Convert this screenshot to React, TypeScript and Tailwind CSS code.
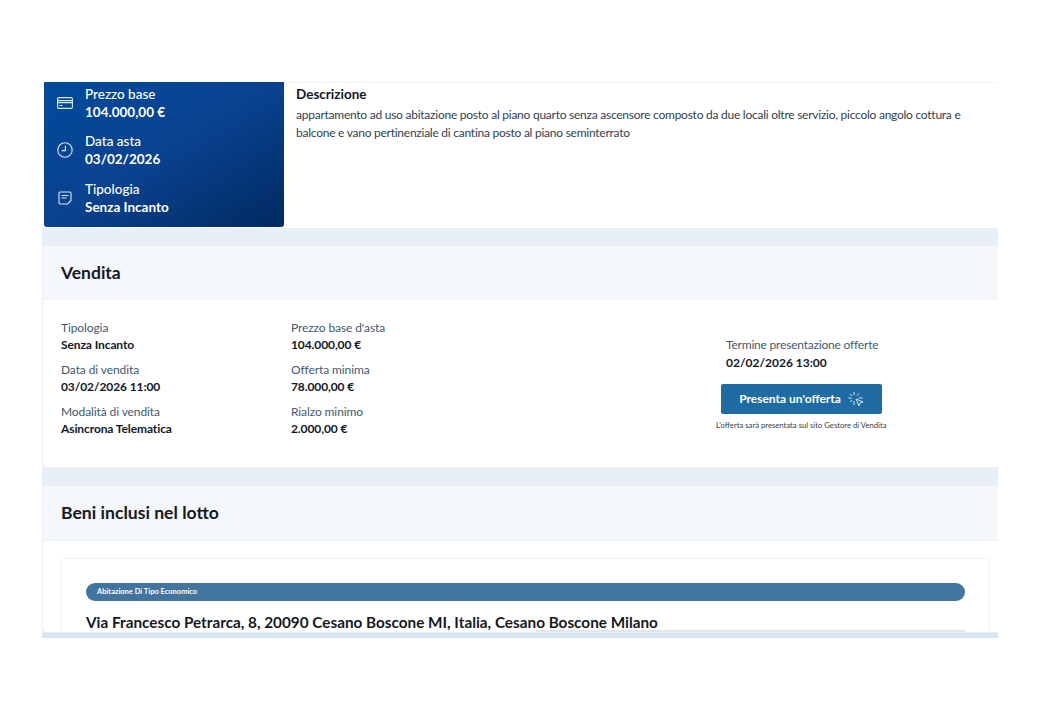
import React from "react";

const Pair = ({ label, value }: { label: string; value: string }) => (
  <div className="h-[42px]">
    <div className="text-[12px] leading-[20px] tracking-[-0.1px] text-[#435a70]">{label}</div>
    <div className="-mt-[1px] text-[12px] leading-[16px] tracking-[-0.1px] font-bold text-[#111827]">{value}</div>
  </div>
);

const Side = ({ icon, a, b }: { icon: React.ReactNode; a: string; b: string }) => (
  <div className="flex h-[47.5px] items-center">
    <div className="flex w-[41px] justify-center pl-[1px]">{icon}</div>
    <div className="text-[13.5px] leading-[18px] text-white">
      <div className="font-medium">{a}</div>
      <div className="font-bold">{b}</div>
    </div>
  </div>
);

export default function App() {
  return (
    <div className="min-h-[720px] bg-white pt-[82px] pl-[42px]" style={{ fontFamily: "Lato, 'Noto Sans', sans-serif" }}>
      <div className="w-[956px] h-[556px] overflow-hidden bg-[#e8eff6] border-b-[5px] border-[#d9e6f2]">
        <div className="flex h-[146px] bg-white">
          <div className="ml-[2px] mb-[1px] w-[240px] rounded-b-[3px] bg-gradient-to-br from-[#004a9c] via-[#0a428f] to-[#012a60]">
            <div className="-mt-[3px]">
              <Side
                a="Prezzo base"
                b="104.000,00 €"
                icon={
                  <svg width="16" height="12" viewBox="0 0 16 12" fill="none" stroke="#dbe7f5" strokeWidth="1.1">
                    <rect x="0.6" y="0.6" width="14.8" height="10.8" rx="1.2" />
                    <path d="M0.6 3.6h14.8M0.6 5.6h14.8M2.5 8.5h3" />
                  </svg>
                }
              />
              <Side
                a="Data asta"
                b="03/02/2026"
                icon={
                  <svg width="16" height="16" viewBox="0 0 16 16" fill="none" stroke="#dbe7f5" strokeWidth="1.1">
                    <circle cx="8" cy="8" r="7.2" />
                    <path d="M8.4 3.8V8.6H4.6" />
                  </svg>
                }
              />
              <Side
                a="Tipologia"
                b="Senza Incanto"
                icon={
                  <svg width="14" height="14" viewBox="0 0 14 14" fill="none" stroke="#dbe7f5" strokeWidth="1.1">
                    <path d="M2.2 1h9.6A1.2 1.2 0 0 1 13 2.2V9.5L9.5 13H2.2A1.2 1.2 0 0 1 1 11.8V2.2A1.2 1.2 0 0 1 2.2 1Z" />
                    <path d="M3.5 4.5h7M3.5 7h5" />
                  </svg>
                }
              />
            </div>
          </div>
          <div className="flex-1 border-t border-[#f2f4f7] pl-[12px] pr-[30px]">
            <div className="pt-[2px] text-[13.5px] leading-[18px] font-bold text-[#111827]">Descrizione</div>
            <p className="mt-[3px] text-[12px] leading-[18px] tracking-[-0.25px] text-[#2f3f4f]">
              appartamento ad uso abitazione posto al piano quarto senza ascensore composto da due locali oltre servizio, piccolo angolo cottura e balcone e vano pertinenziale di cantina posto al piano seminterrato
            </p>
          </div>
        </div>

        <section className="mt-[18px] ml-[1px] h-[221px] rounded-l-[4px] bg-white overflow-hidden">
          <div className="flex h-[54px] items-center border-b border-[#eef2f6] bg-[#f4f7fb] pl-[18px] pt-[1px] text-[17.5px] font-bold text-[#15191e]">Vendita</div>
          <div className="flex pt-[18px] pl-[18px]">
            <div className="w-[230px]">
              <Pair label="Tipologia" value="Senza Incanto" />
              <Pair label="Data di vendita" value="03/02/2026 11:00" />
              <Pair label="Modalità di vendita" value="Asincrona Telematica" />
            </div>
            <div className="w-[426px]">
              <Pair label="Prezzo base d'asta" value="104.000,00 €" />
              <Pair label="Offerta minima" value="78.000,00 €" />
              <Pair label="Rialzo minimo" value="2.000,00 €" />
            </div>
            <div className="w-[171px] pt-[17px]">
              <div className="pl-[9px]">
                <div className="whitespace-nowrap text-[12px] leading-[20px] tracking-[-0.2px] text-[#435a70]">Termine presentazione offerte</div>
                <div className="text-[12px] leading-[16px] font-bold text-[#111827]">02/02/2026 13:00</div>
              </div>
              <button className="mt-[13px] ml-[4px] flex h-[30px] w-[161px] items-center justify-center gap-[7px] rounded-[2px] bg-[#1f6ca5] text-[12px] font-bold text-white">
                Presenta un'offerta
                <svg width="16" height="16" viewBox="0 0 16 16" fill="none" stroke="#e6f0f8" strokeWidth="0.9">
                  <path d="M6 1v3M11 2.5 9 4.5M2 3l2 2M0.5 7h3M14.5 7H10.5M2 11l2-2M6 10v4M8 8l7 3-3 1-1 3Z" />
                </svg>
              </button>
              <div className="mt-[5px] -ml-[1px] whitespace-nowrap text-[7.7px] leading-[12px] text-[#33404d]">L'offerta sarà presentata sul sito Gestore di Vendita</div>
            </div>
          </div>
        </section>

        <section className="mt-[19px] ml-[1px] h-[146px] bg-white rounded-l-[4px] overflow-hidden">
          <div className="flex h-[55px] items-center border-b border-[#eef2f6] bg-[#f4f7fb] pl-[18px] pt-[1px] text-[17.6px] font-bold text-[#15191e]">Beni inclusi nel lotto</div>
          <div className="mt-[17px] ml-[18px] mr-[8px] h-[90px] rounded-[3px] border border-[#f1f3f6] px-[24px] pt-[24px]">
            <div className="flex h-[18px] items-center rounded-full bg-[#41749e] pl-[11px] text-[7.5px] font-bold text-white">Abitazione Di Tipo Economico</div>
            <div className="mt-[10px] whitespace-nowrap text-[15.3px] leading-[22px] font-bold text-[#15191e]">Via Francesco Petrarca, 8, 20090 Cesano Boscone MI, Italia, Cesano Boscone Milano</div>
            <div className="-mt-[3px] ml-[450px] h-[2px] bg-[#e4e6e9]"></div>
          </div>
        </section>
      </div>
    </div>
  );
}
